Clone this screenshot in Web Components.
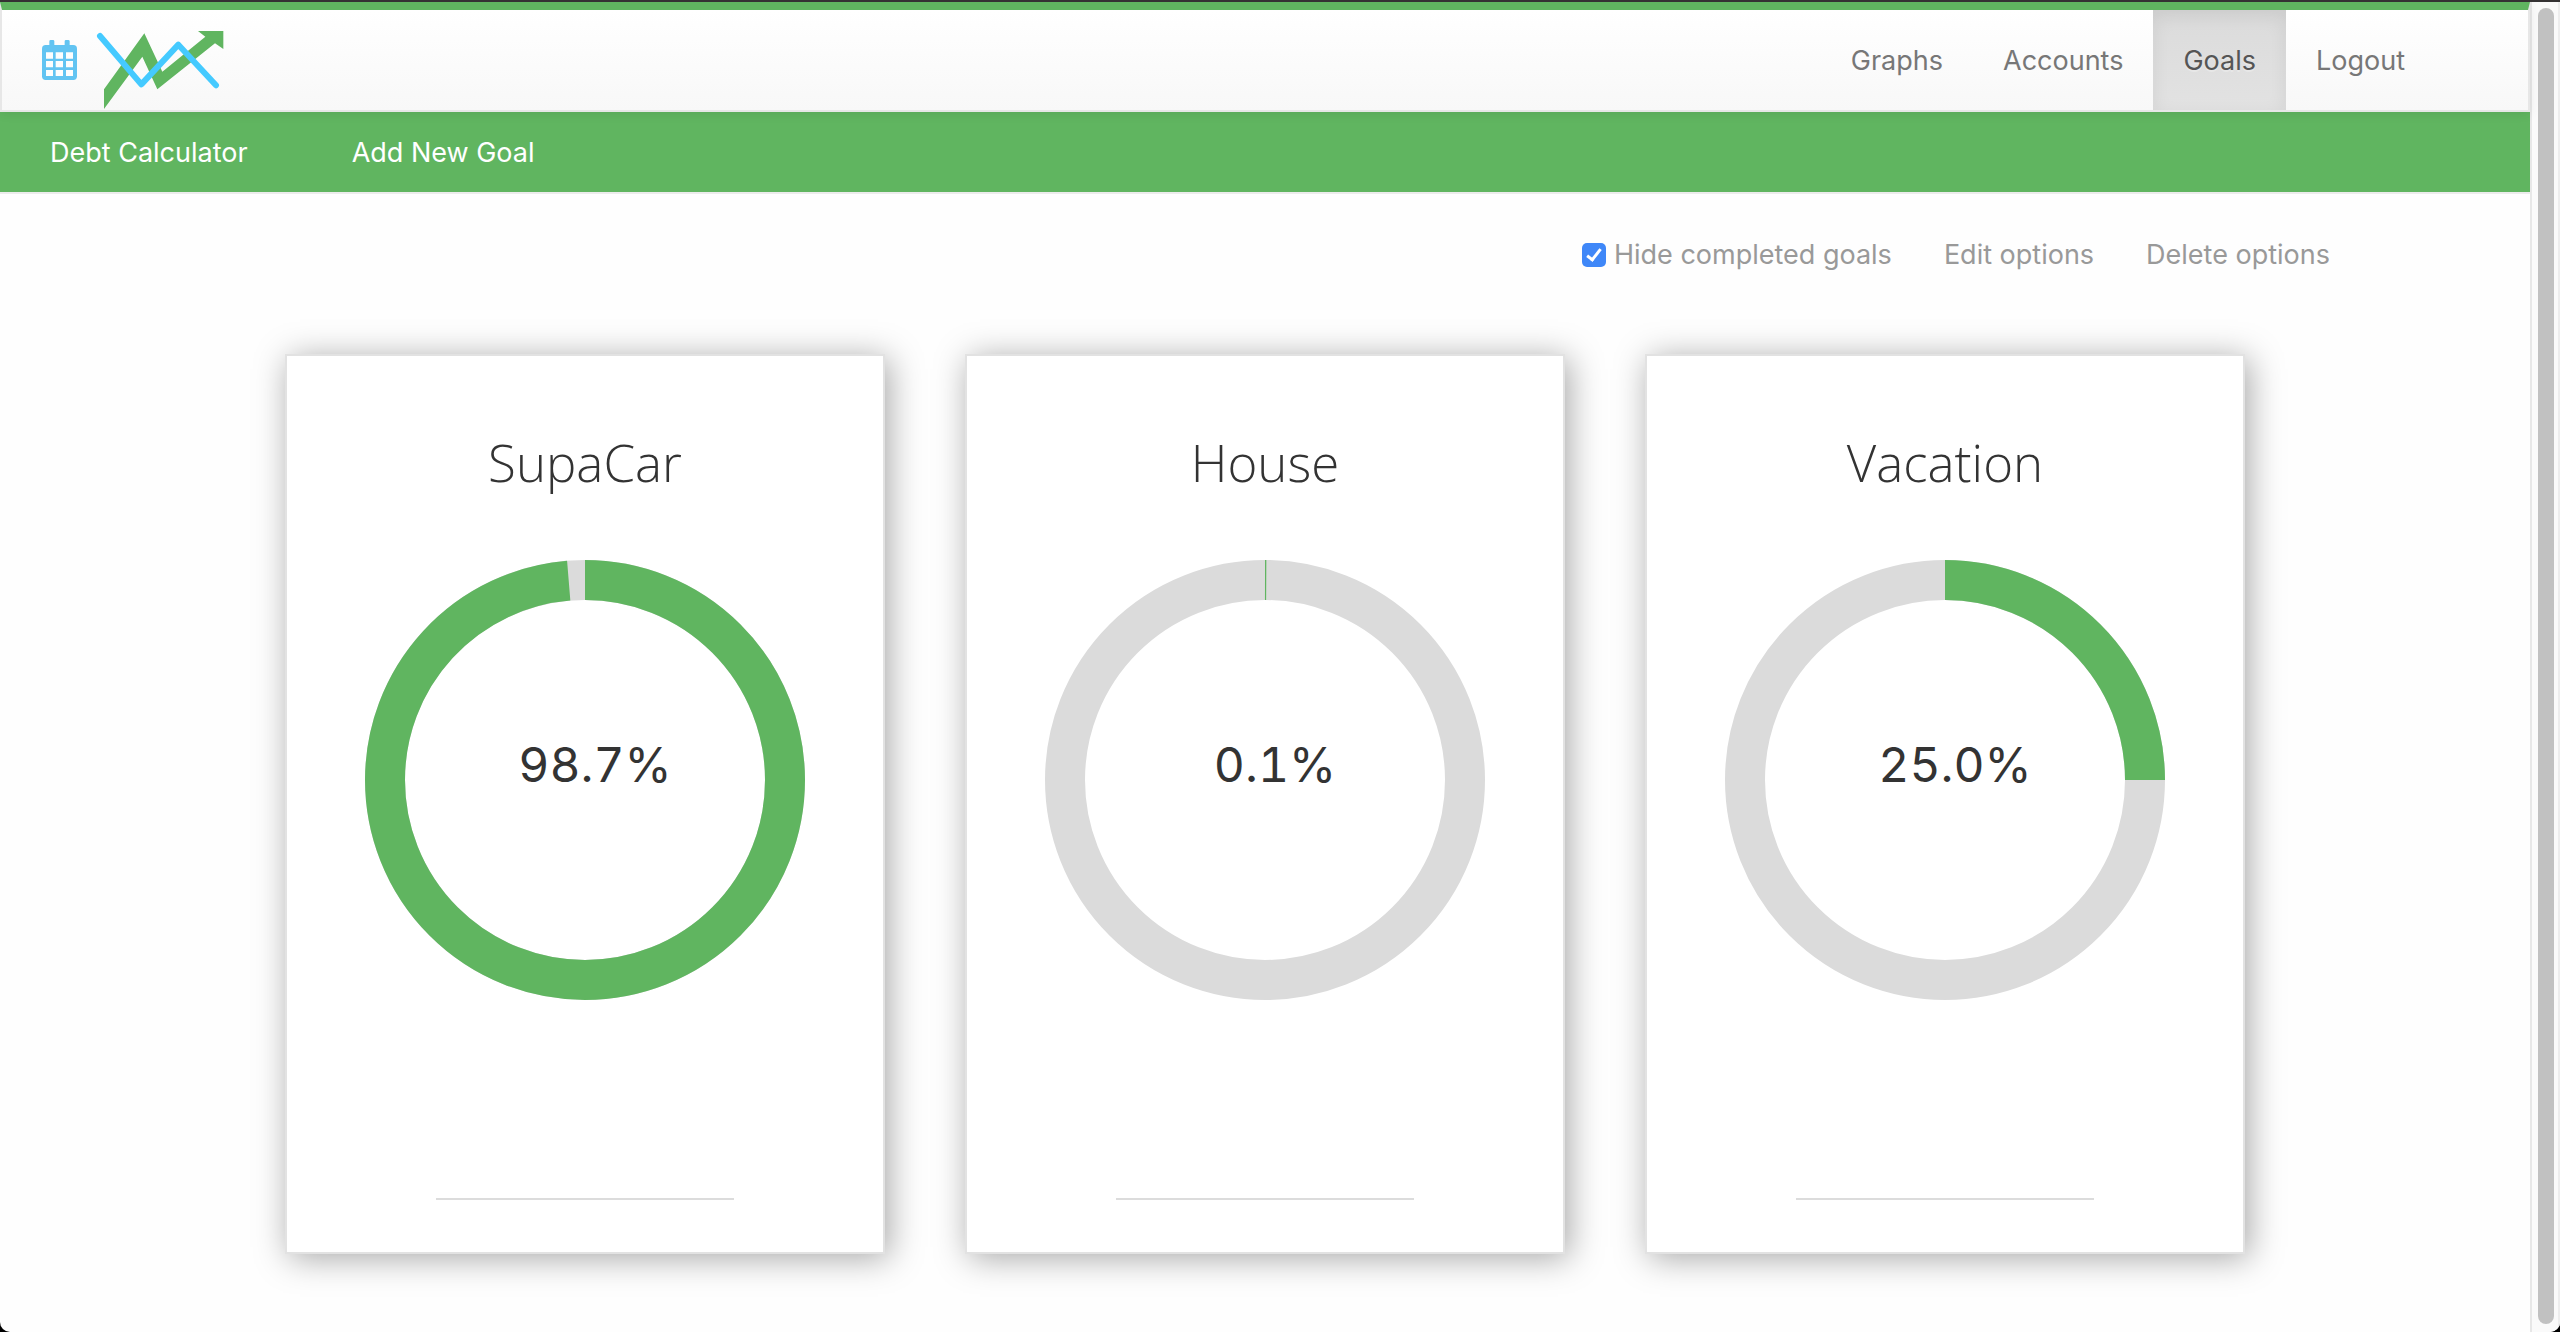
<!DOCTYPE html>
<html lang="en">
<head>
<meta charset="utf-8">
<title>Goals</title>
<style>
  html { background: #000; }
  body { margin: 0; font-family: Inter, "Liberation Sans", sans-serif; font-size: 27px; line-height: 40px; color: #333; }
</style>
</head>
<body>
<goals-app>
  <top-nav slot="header">
    <nav-link href="#graphs">Graphs</nav-link>
    <nav-link href="#accounts">Accounts</nav-link>
    <nav-link href="#goals" active>Goals</nav-link>
    <nav-link href="#logout">Logout</nav-link>
  </top-nav>
  <sub-nav slot="header">
    <a href="#debt">Debt Calculator</a>
    <a href="#new">Add New Goal</a>
  </sub-nav>
  <goal-options></goal-options>
  <goal-list>
    <goal-card name="SupaCar" percent="98.7"></goal-card>
    <goal-card name="House" percent="0.1"></goal-card>
    <goal-card name="Vacation" percent="25.0"></goal-card>
  </goal-list>
</goals-app>

<script>
const define = (name, html, setup) => {
  const template = document.createElement('template');
  template.innerHTML = html;
  customElements.define(name, class extends HTMLElement {
    constructor() {
      super();
      this.attachShadow({ mode: 'open' }).append(template.content.cloneNode(true));
    }
    connectedCallback() { if (setup) setup(this, this.shadowRoot); }
  });
};

define('goals-app', `
  <style>
    :host { display: flex; box-sizing: border-box; min-height: 100vh; background: #fefefe;
      border-top: 2px solid #353233; border-radius: 0 0 10px 10px; overflow: hidden; }
    main { flex: 1; min-width: 0; }
  </style>
  <main><slot name="header"></slot><slot></slot></main>
  <scroll-rail></scroll-rail>`);

define('scroll-rail', `
  <style>
    :host { display: flex; box-sizing: border-box; width: 30px; padding: 6px 4px 8px 6px;
      background: #fafafa; border-left: 2px solid #e7e7e7; border-right: 2px solid #ededed; }
    div { flex: 1; border-radius: 8px; background: #c1c1c1; }
  </style>
  <div></div>`);

define('top-nav', `
  <style>
    :host { display: flex; position: relative; z-index: 1; height: 100px; justify-content: space-between;
      padding: 0 93px 0 40px; border: 2px solid #e7e7e7; border-top: 8px solid #60b560;
      background: linear-gradient(#fff, #f8f8f8); box-shadow: 0 2px 10px rgba(0,0,0,.08); }
    .brand { display: flex; align-items: center; gap: 19px; }
    .brand a { display: flex; }
    .brand a + a { align-self: flex-end; }
    nav { display: flex; }
  </style>
  <div class="brand">
    <a href="#calendar" aria-label="Calendar">
      <svg width="35" height="40" viewBox="126 117 105 120">
        <rect x="126" y="132" width="105" height="105" rx="11" fill="#62c4f2"/>
        <path d="M148 140v-19q0-4 4-4h7q4 0 4 4v19zM194 140v-19q0-4 4-4h7q4 0 4 4v19z" fill="#62c4f2"/>
        <path d="M138 154h21v19h-21zM167 154h22v19h-22zM198 154h21v19h-21zM138 180h21v19h-21zM167 180h22v19h-22zM198 180h21v19h-21zM138 207h21v18h-21zM167 207h22v18h-22zM198 207h21v18h-21z" fill="#fdfdfd"/>
      </svg>
    </a>
    <a href="#home" aria-label="Home">
      <svg width="128" height="80" viewBox="288 90 384 240">
        <path d="M312 268 433 100 487 215 616 110 594 93H670V147L645 130 472 268 427 170 312 327Z" fill="#60b560"/>
        <path d="M300 108 424 253 535 134 648 256" fill="none" stroke="#45caff" stroke-width="18" stroke-linecap="round" stroke-linejoin="round"/>
      </svg>
    </a>
  </div>
  <nav><slot></slot></nav>`);

define('nav-link', `
  <style>
    :host { display: flex; }
    a { display: flex; align-items: center; padding: 2px 30px 0; color: #777; text-decoration: none;
      text-shadow: 0 2px 0 rgba(255,255,255,.25); }
    :host([active]) a { color: #555; background: linear-gradient(#dbdbdb, #e2e2e2);
      box-shadow: inset 0 6px 18px rgba(0,0,0,.075); }
  </style>
  <a><slot></slot></a>`,
  (host, root) => { root.querySelector('a').href = host.getAttribute('href'); });

define('sub-nav', `
  <style>
    :host { display: flex; align-items: center; gap: 104px; height: 78px; padding: 2px 50px 0;
      background: #60b560; border-bottom: 2px solid #ececec; }
    ::slotted(a) { color: #fff; text-decoration: none; }
  </style>
  <slot></slot>`);

define('goal-options', `
  <style>
    :host { display: flex; justify-content: flex-end; gap: 52px; padding: 41px 200px 0; color: #999; }
    label { display: flex; align-items: center; gap: 8px; }
    input { appearance: none; display: grid; place-items: center; width: 24px; height: 24px; margin: 0;
      border-radius: 5px; background: #3f87f8; }
    input:checked::before { content: ""; width: 5px; height: 12px; margin-bottom: 4px; border: solid #fff;
      border-width: 0 3px 3px 0; transform: rotate(38deg); }
    a { color: inherit; text-decoration: none; }
  </style>
  <label for="hide"><input id="hide" type="checkbox" checked>Hide completed goals</label>
  <a href="#edit">Edit options</a>
  <a href="#delete">Delete options</a>`);

define('goal-list', `
  <style>
    :host { display: flex; justify-content: center; gap: 80px; padding: 79px 0 78px; }
  </style>
  <slot></slot>`);

define('goal-card', `
  <style>
    :host { display: flex; flex-direction: column; align-items: center; box-sizing: border-box;
      width: 600px; padding: 76px 0 52px; border: 2px solid #e2e2e2; background: #fff;
      box-shadow: 4px 4px 32px rgba(0,0,0,.35); }
    h2 { margin: 0 0 68px; font: 300 51px/60px "Open Sans", sans-serif; }
    .chart { display: grid; place-items: center; margin-bottom: 198px; }
    .chart > * { grid-area: 1 / 1; }
    .value { padding: 0 0 30px 20px; font-size: 48px; line-height: 60px; font-variant-numeric: tabular-nums; }
    circle { fill: none; stroke-width: 40; stroke: #dbdbdb; }
    .done { stroke: #60b560; }
    hr { width: 50%; height: 2px; margin: 0; border: 0; background: #dcdcdc; }
  </style>
  <h2></h2>
  <div class="chart">
    <svg width="440" height="440" viewBox="0 0 440 440" aria-hidden="true">
      <circle cx="220" cy="220" r="200"/>
      <circle class="done" cx="220" cy="220" r="200" pathLength="100" transform="rotate(-90 220 220)"/>
    </svg>
    <div class="value"></div>
  </div>
  <hr>`,
  (host, root) => {
    const percent = host.getAttribute('percent');
    root.querySelector('h2').textContent = host.getAttribute('name');
    root.querySelector('.value').textContent = percent + '%';
    root.querySelector('.done').setAttribute('stroke-dasharray', Number(percent) + ' 100');
  });
</script>
</body>
</html>
